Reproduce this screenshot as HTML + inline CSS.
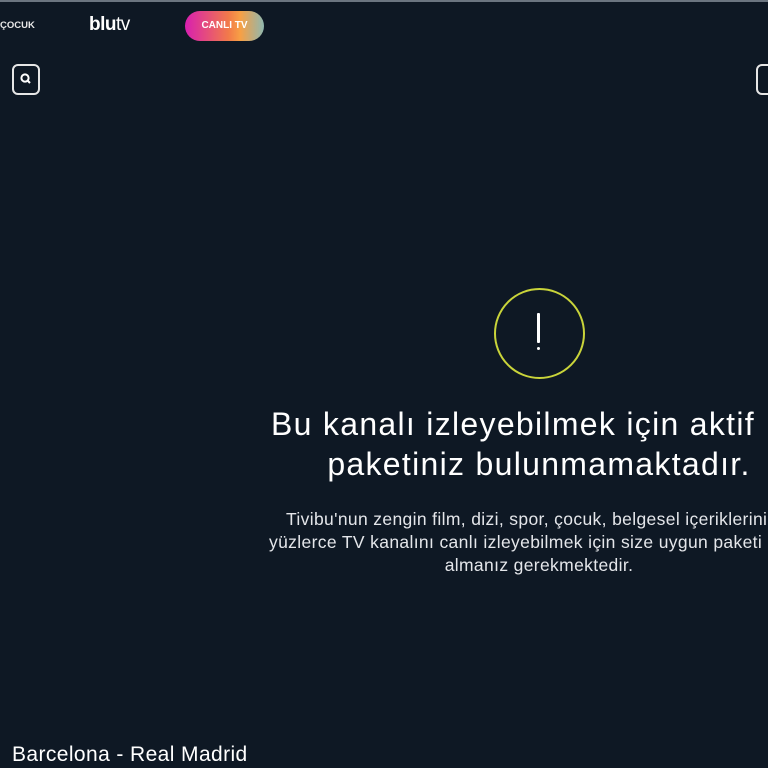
<!DOCTYPE html>
<html><head><meta charset="utf-8"><style>
html,body{margin:0;padding:0;width:768px;height:768px;overflow:hidden;background:#0e1824;font-family:"Liberation Sans",sans-serif;color:#fff}
.topline{position:absolute;left:0;top:0;width:768px;height:2px;background:#6b7580}
.l{position:absolute;white-space:nowrap}
.t{font-size:32px;font-weight:500;letter-spacing:1.3px}
.b{font-size:17.5px;color:#e4e6ea;letter-spacing:0.35px}
</style></head><body>
<div class="topline"></div>
<div class="l" style="left:0;top:20px;font-size:9.5px;font-weight:bold;color:#e8e8e8">ÇOCUK</div>
<div class="l" style="left:89px;top:14px;font-size:19px;font-weight:bold;letter-spacing:-0.5px">blu<span style="font-weight:normal">tv</span></div>
<div style="position:absolute;left:185px;top:11px;width:79px;height:30px;border-radius:15px;background:linear-gradient(90deg,#d81fb0,#f27a4a 55%,#f7a045 70%,#8fb8b0);"></div>
<div class="l" style="left:185px;top:20px;width:79px;text-align:center;font-size:10px;font-weight:bold">CANLI TV</div>
<div style="position:absolute;left:12px;top:64px;width:24px;height:27px;border:2px solid #e6e6e6;border-radius:6px"></div>
<svg style="position:absolute;left:19px;top:72px" width="13" height="13"><circle cx="6" cy="6" r="3.6" stroke="#fff" stroke-width="2" fill="none"/><line x1="8.5" y1="8.5" x2="11" y2="11" stroke="#fff" stroke-width="2"/></svg>
<div style="position:absolute;left:756px;top:64px;width:24px;height:27px;border:2px solid #e6e6e6;border-radius:6px"></div>
<div style="position:absolute;left:494px;top:288px;width:87px;height:87px;border:2px solid #c9d43a;border-radius:50%"></div>
<div style="position:absolute;left:537px;top:313px;width:3px;height:30px;background:#fff;border-radius:1px"></div>
<div style="position:absolute;left:537px;top:347px;width:3px;height:3px;background:#fff;border-radius:50%"></div>
<div class="l t" style="left:248px;top:406px;width:530px;text-align:center">Bu kanalı izleyebilmek için aktif</div>
<div class="l t" style="left:289px;top:446px;width:500px;text-align:center">paketiniz bulunmamaktadır.</div>
<div class="l b" style="left:286px;top:509px">Tivibu'nun zengin film, dizi, spor, çocuk, belgesel içeriklerini</div>
<div class="l b" style="left:269px;top:532px">yüzlerce TV kanalını canlı izleyebilmek için size uygun paketi</div>
<div class="l b" style="left:419px;top:555px;width:240px;text-align:center">almanız gerekmektedir.</div>
<div class="l" style="left:12px;top:743px;font-size:21px;letter-spacing:0.4px">Barcelona - Real Madrid</div>
</body></html>
